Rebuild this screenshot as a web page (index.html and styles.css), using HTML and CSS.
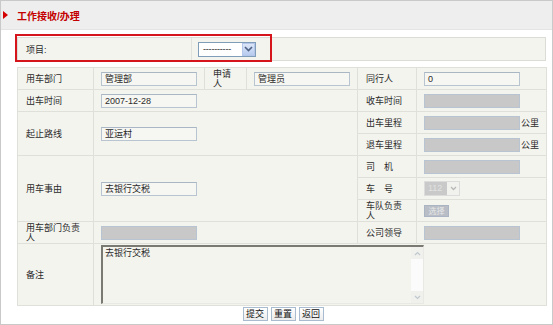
FILE: index.html
```html
<!DOCTYPE html>
<html lang="zh">
<head>
    <meta charset="UTF-8">
    <title>工作接收/办理</title>
    <link rel="stylesheet" href="styles.css">
</head>
<body>
    <div class="page">
        <div class="title-bar">
            <span class="arrow"></span>
            <span class="title">工作接收/办理</span>
        </div>

        <div class="content">
            <div class="item-row">
                <div class="item-label">项目:</div>
                <div class="item-field">
                    <div class="fake-select">
                        <span class="sel-text">----------</span>
                        <span class="sel-btn">
                            <svg width="9" height="6" viewBox="0 0 9 6"><path d="M1 1 L4.5 4.5 L8 1" fill="none" stroke="#4d6185" stroke-width="1.6"/></svg>
                        </span>
                    </div>
                </div>
                <div class="item-hint"></div>
            </div>

            <table class="form-table">
                <colgroup>
                    <col style="width:76px">
                    <col style="width:111px">
                    <col style="width:42px">
                    <col style="width:111px">
                    <col style="width:59px">
                    <col style="width:130px">
                </colgroup>
                <tr>
                    <td class="label">用车部门</td>
                    <td class="field"><div class="input">管理部</div></td>
                    <td class="label">申请人</td>
                    <td class="field"><div class="input">管理员</div></td>
                    <td class="label">同行人</td>
                    <td class="field"><div class="input">0</div></td>
                </tr>
                <tr>
                    <td class="label">出车时间</td>
                    <td class="field" colspan="3"><div class="input">2007-12-28</div></td>
                    <td class="label">收车时间</td>
                    <td class="field"><div class="input disabled"></div></td>
                </tr>
                <tr>
                    <td class="label" rowspan="2">起止路线</td>
                    <td class="field" colspan="3" rowspan="2"><div class="input">亚运村</div></td>
                    <td class="label">出车里程</td>
                    <td class="field"><div class="input disabled"></div><span class="unit">公里</span></td>
                </tr>
                <tr>
                    <td class="label">退车里程</td>
                    <td class="field"><div class="input disabled"></div><span class="unit">公里</span></td>
                </tr>
                <tr>
                    <td class="label" rowspan="3">用车事由</td>
                    <td class="field" colspan="3" rowspan="3"><div class="input">去银行交税</div></td>
                    <td class="label">司　机</td>
                    <td class="field"><div class="input disabled"></div></td>
                </tr>
                <tr>
                    <td class="label">车　号</td>
                    <td class="field">
                        <div class="car-select">
                            <span class="car-num">112</span>
                            <span class="car-btn">
                                <svg width="7" height="5" viewBox="0 0 7 5"><path d="M1 1 L3.5 3.5 L6 1" fill="none" stroke="#b8b8b8" stroke-width="1.3"/></svg>
                            </span>
                        </div>
                    </td>
                </tr>
                <tr>
                    <td class="label">车队负责人</td>
                    <td class="field"><div class="pick-btn">选择</div></td>
                </tr>
                <tr>
                    <td class="label">用车部门负责人</td>
                    <td class="field" colspan="3"><div class="input disabled"></div></td>
                    <td class="label">公司领导</td>
                    <td class="field"><div class="input disabled"></div></td>
                </tr>
                <tr class="note-row">
                    <td class="label">备注</td>
                    <td class="field note-cell" colspan="5">
                        <div class="textarea">
                            <div class="textarea-text">去银行交税</div>
                            <div class="scrollbar">
                                <span class="scroll-arrow">
                                    <svg width="7" height="5" viewBox="0 0 7 5"><path d="M1 4 L3.5 1.5 L6 4" fill="none" stroke="#c0c8d0" stroke-width="1.2"/></svg>
                                </span>
                                <span class="scroll-arrow">
                                    <svg width="7" height="5" viewBox="0 0 7 5"><path d="M1 1 L3.5 3.5 L6 1" fill="none" stroke="#c0c8d0" stroke-width="1.2"/></svg>
                                </span>
                            </div>
                        </div>
                    </td>
                </tr>
            </table>

            <div class="actions">
                <button class="btn">提交</button>
                <button class="btn">重置</button>
                <button class="btn">返回</button>
            </div>
        </div>
    </div>
</body>
</html>
```

FILE: styles.css
```css
* {
    margin: 0;
    padding: 0;
    box-sizing: border-box;
}

body {
    font-family: "Liberation Sans", "Noto Sans CJK SC", sans-serif;
    font-size: 9px;
    color: #2b2b2b;
    background: white;
}

.page {
    width: 553px;
    height: 325px;
    border: 1px solid #c9c9c9;
    background: white;
}

.title-bar {
    height: 29px;
    background: #eeeeee;
    border-bottom: 1px solid #e4e4e4;
    display: flex;
    align-items: center;
}

.arrow {
    width: 0;
    height: 0;
    margin-left: 2px;
    border-top: 4px solid transparent;
    border-bottom: 4px solid transparent;
    border-left: 5px solid #d40000;
}

.title {
    margin-left: 9px;
    color: #c40000;
    font-weight: bold;
    font-size: 10px;
}

.content {
    padding: 7px 6px 0 16px;
}

.item-row {
    position: relative;
    display: flex;
    height: 24px;
    background: #f4f4ef;
    border: 1px solid #dcdcd6;
}

.item-label {
    width: 174px;
    padding-left: 8px;
    border-right: 1px solid #e2e2dc;
    display: flex;
    align-items: center;
}

.item-field {
    padding-left: 6px;
    display: flex;
    align-items: center;
}

.fake-select {
    width: 58px;
    height: 15px;
    background: white;
    border: 1px solid #7f9db9;
    display: flex;
    align-items: center;
    justify-content: space-between;
}

.sel-text {
    padding-left: 4px;
    font-size: 9px;
    letter-spacing: -0.2px;
}

.sel-btn {
    width: 13px;
    height: 13px;
    background: linear-gradient(#dce6f7, #b7cbf0);
    border: 1px solid #b4c6ea;
    display: flex;
    align-items: center;
    justify-content: center;
}

.item-hint {
    position: absolute;
    left: -3px;
    top: -4px;
    width: 257px;
    height: 28px;
    border: 2px solid #d6141c;
}

.form-table {
    margin-top: 6px;
    width: 529px;
    table-layout: fixed;
    border-collapse: collapse;
    background: #f4f4ef;
    border: 1px solid #d6d6d0;
}

.form-table td {
    height: 22px;
    border: 1px solid #e0e0da;
    vertical-align: middle;
    line-height: 10px;
}

.label {
    padding: 0 8px;
}

.field {
    padding: 0 0 0 7px;
    white-space: nowrap;
}

.input {
    display: inline-block;
    vertical-align: middle;
    width: 96px;
    height: 14px;
    line-height: 12px;
    padding-left: 3px;
    background: #f6f6f2;
    border: 1px solid #b8c4d0;
    border-top-color: #a9b6c4;
}

.input.disabled {
    background: #c8c8c8;
    border-color: #b9c4d2;
}

.unit {
    vertical-align: middle;
    margin-left: 1px;
}

.car-select {
    display: inline-flex;
    vertical-align: middle;
    width: 36px;
    height: 15px;
    border: 1px solid #dcdcdc;
    background: #c9c9c9;
}

.car-num {
    flex: 1;
    color: #e2e2e2;
    padding-left: 3px;
    line-height: 13px;
}

.car-btn {
    width: 12px;
    background: #f1f1ee;
    display: flex;
    align-items: center;
    justify-content: center;
}

.pick-btn {
    display: inline-block;
    vertical-align: middle;
    width: 25px;
    height: 12px;
    line-height: 11px;
    font-size: 8px;
    text-align: center;
    color: #e8e8e8;
    background: #b9bec6;
    border: 1px solid #aab4c2;
}

.note-row td {
    height: 62px;
}

.note-cell {
    padding: 1px 0 1px 7px;
}

.textarea {
    width: 323px;
    height: 59px;
    display: flex;
    background: #f4f4ef;
    border-top: 2px solid #7a7a72;
    border-left: 2px solid #7a7a72;
    border-right: 1px solid #e8e8e4;
    border-bottom: 1px solid #e8e8e4;
}

.textarea-text {
    flex: 1;
    padding: 1px 2px;
    line-height: 10px;
}

.scrollbar {
    width: 12px;
    background: #fbfbfb;
    display: flex;
    flex-direction: column;
    justify-content: space-between;
}

.scroll-arrow {
    height: 12px;
    background: #f0f0ec;
    display: flex;
    align-items: center;
    justify-content: center;
}

.actions {
    display: flex;
    justify-content: center;
    gap: 3px;
    padding-top: 1px;
    padding-left: 3px;
}

.btn {
    width: 25px;
    height: 14px;
    font-family: "Noto Sans CJK SC", sans-serif;
    font-size: 9px;
    line-height: 12px;
    color: #111;
    background: linear-gradient(#ffffff, #ececec);
    border: 1px solid #a9bccf;
    cursor: pointer;
}
```
